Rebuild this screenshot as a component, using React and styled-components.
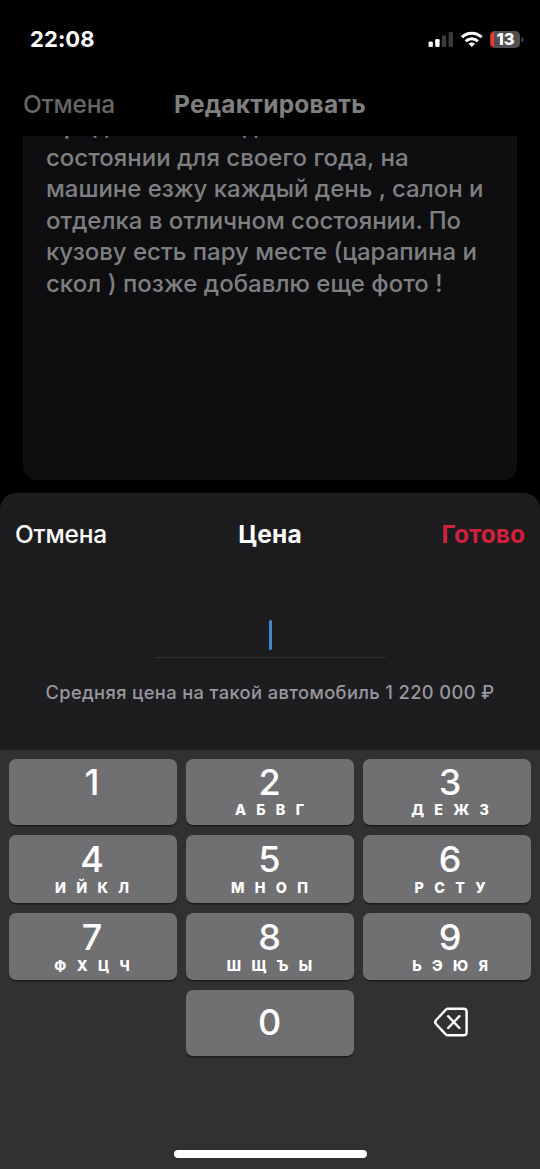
import React from 'react';
import styled, { createGlobalStyle } from 'styled-components';

const GlobalStyle = createGlobalStyle`
  * {
    box-sizing: border-box;
  }

  body {
    margin: 0;
    background-color: #000;
    font-family: Inter, 'Liberation Sans', sans-serif;
    color: #fff;
  }
`;

const Screen = styled.div`
  display: flex;
  flex-direction: column;
  width: 540px;
  height: 1169px;
  overflow: hidden;
  background-color: #000;
`;

const StatusBar = styled.div`
  display: flex;
  align-items: center;
  justify-content: space-between;
  height: 79px;
  padding: 0 16px 0 30px;
`;

const Time = styled.span`
  margin-top: -1px;
  font-size: 22px;
  font-weight: 700;
  letter-spacing: 0.1px;
`;

const StatusIcons = styled.svg`
  display: block;
`;

const Header = styled.div`
  display: grid;
  grid-template-columns: 1fr auto 1fr;
  align-items: center;
  height: ${({ $height }) => $height}px;
  padding: 0 ${({ $padding }) => $padding}px;
  font-size: 24.5px;
  line-height: 30px;
`;

const HeaderButton = styled.button`
  justify-self: ${({ $right }) => ($right ? 'end' : 'start')};
  padding: 0;
  border: 0;
  background: none;
  font: inherit;
  font-weight: ${({ $bold }) => ($bold ? 700 : 450)};
  letter-spacing: ${({ $bold }) => ($bold ? 0 : -0.2)}px;
  color: ${({ $color }) => $color || '#fff'};
`;

const HeaderTitle = styled.h1`
  margin: 0;
  font-size: 24.5px;
  font-weight: 700;
  letter-spacing: 0.22px;
  color: ${({ $color }) => $color || '#fff'};
`;

const Description = styled.div`
  height: 344px;
  margin: 7px 23px 13px;
  padding: 0 23px;
  overflow: hidden;
  border-radius: 0 0 14px 14px;
  background-color: #0e0e10;
  color: #7f7f81;
`;

const DescriptionText = styled.p`
  margin: -26px 0 0;
  font-size: 24px;
  font-weight: 500;
  line-height: 31.6px;
  white-space: pre;
`;

const Line = styled.span`
  display: block;
  letter-spacing: ${({ $spacing }) => $spacing || 0}px;
`;

const Sheet = styled.div`
  display: flex;
  flex-direction: column;
  height: 257px;
  border-radius: 16px 16px 0 0;
  background-color: #1d1d1f;
`;

const PriceInput = styled.div`
  display: flex;
  justify-content: center;
  align-items: flex-start;
  align-self: center;
  width: 231px;
  height: 38px;
  margin-top: 45px;
  border-bottom: 1px solid #303032;
`;

const Caret = styled.span`
  width: 3px;
  height: 30px;
  border-radius: 1.5px;
  background-color: #4787c9;
`;

const Hint = styled.p`
  margin: 22px 0 0;
  font-size: 18.3px;
  font-weight: 500;
  line-height: 24px;
  letter-spacing: 0.38px;
  text-align: center;
  white-space: nowrap;
  color: #98989e;
`;

const Keyboard = styled.div`
  display: flex;
  flex-direction: column;
  align-items: center;
  justify-content: space-between;
  height: 419px;
  padding: 9px 9px 11px;
  background-color: #313133;
`;

const Keys = styled.div`
  display: grid;
  grid-template-columns: repeat(3, 168px);
  grid-template-rows: 66px 68px 67px 66px;
  gap: 10px 9px;
`;

const Key = styled.button`
  display: flex;
  flex-direction: column;
  align-items: center;
  justify-content: ${({ $center }) => ($center ? 'center' : 'flex-start')};
  padding: ${({ $top }) => $top || 0}px 0 ${({ $center }) => ($center ? 1 : 0)}px;
  border: 0;
  border-radius: 7px;
  background-color: #707072;
  box-shadow: 0 1.5px 0 #1b1b1d;
  font-family: inherit;
  color: #fff;

  &:nth-child(3n + 1) {
    padding-right: 2px;
  }

  &:nth-child(3n + 2) {
    padding-right: 1px;
  }

  &:nth-child(3n) {
    padding-left: 6px;
  }
`;

const DeleteKey = styled.button`
  display: flex;
  grid-column: 3;
  align-items: center;
  justify-content: center;
  padding: 0 0 2px 8px;
  border: 0;
  background: none;
`;

const Digit = styled.span`
  font-size: 36px;
  font-weight: 500;
  line-height: 39px;
`;

const Letters = styled.span`
  margin: ${({ $shift }) => $shift}px -3.6px 0 0;
  font-size: 14.3px;
  font-weight: 800;
  line-height: 16px;
  letter-spacing: 3.6px;
  white-space: pre;
`;

const HomeIndicator = styled.div`
  width: 193px;
  height: 8px;
  border-radius: 4px;
  background-color: #fff;
`;

const lines = [
  { text: 'Продаю авто в идеальном' },
  { text: 'состоянии для своего года, на' },
  { text: 'машине езжу каждый день , салон и', spacing: -0.03 },
  { text: 'отделка в отличном состоянии. По', spacing: -0.03 },
  { text: 'кузову есть пару месте (царапина и', spacing: -0.02 },
  { text: 'скол ) позже добавлю еще фото !', spacing: 0.02 },
];

const keys = [
  { digit: '1', top: 4 },
  { digit: '2', letters: 'АБВГ', top: 4 },
  { digit: '3', letters: 'ДЕЖЗ', top: 4 },
  { digit: '4', letters: 'ИЙКЛ', top: 5, shift: 1 },
  { digit: '5', letters: 'МНОП', top: 5, shift: 1 },
  { digit: '6', letters: 'РСТУ', top: 5, shift: 1 },
  { digit: '7', letters: 'ФХЦЧ', top: 5, shift: 1 },
  { digit: '8', letters: 'ШЩЪЫ', top: 5, shift: 1 },
  { digit: '9', letters: 'ЬЭЮЯ', top: 5, shift: 1 },
];

function Status() {
  return (
    <StatusBar>
      <Time>22:08</Time>
      <StatusIcons width="96" height="20" viewBox="428 30 96 20">
        <g fill="#fff">
          <rect x="428.5" y="41.6" width="4.4" height="5.4" rx="1.3" />
          <rect x="435.2" y="39" width="4.4" height="8" rx="1.3" />
          <rect x="441.9" y="35.5" width="4.4" height="11.5" rx="1.3" fill="#3b3b3b" />
          <rect x="448.6" y="32" width="4.4" height="15" rx="1.3" fill="#3b3b3b" />
        </g>
        <g fill="none" stroke="#fff" strokeWidth="3">
          <path d="M462 37.3a14 14 0 0 1 19.6 0" />
          <path d="M465.7 41.3a8.7 8.7 0 0 1 12.2 0" />
        </g>
        <path d="M471.8 46.9l-3.2-3.2a4.6 4.6 0 0 1 6.4 0z" fill="#fff" />
        <clipPath id="battery">
          <rect x="490.3" y="31" width="29.7" height="17" rx="5" />
        </clipPath>
        <g clipPath="url(#battery)">
          <rect x="490" y="31" width="31" height="17" fill="#505052" />
          <rect x="490" y="31" width="4.1" height="17" fill="#e8392f" />
        </g>
        <path d="M521.4 36.7c2.6 1 2.6 4.8 0 5.8z" fill="#505052" />
        <text x="505.6" y="45.3" fill="#fff" fontSize="16.5" fontWeight="800" textAnchor="middle">
          13
        </text>
      </StatusIcons>
    </StatusBar>
  );
}

export default function App() {
  return (
    <>
      <GlobalStyle />
      <Screen>
        <Status />
        <Header $height={50} $padding={23}>
          <HeaderButton $color="#666">Отмена</HeaderButton>
          <HeaderTitle $color="#808080">Редактировать</HeaderTitle>
        </Header>
        <Description>
          <DescriptionText>
            {lines.map((line) => (
              <Line key={line.text} $spacing={line.spacing}>
                {line.text}
              </Line>
            ))}
          </DescriptionText>
        </Description>

        <Sheet>
          <Header $height={82} $padding={15}>
            <HeaderButton>Отмена</HeaderButton>
            <HeaderTitle>Цена</HeaderTitle>
            <HeaderButton $right $bold $color="#d2213b">
              Готово
            </HeaderButton>
          </Header>
          <PriceInput>
            <Caret />
          </PriceInput>
          <Hint>Средняя цена на такой автомобиль 1 220 000 ₽</Hint>
        </Sheet>

        <Keyboard>
          <Keys>
            {keys.map(({ digit, letters, top, shift = 0 }) => (
              <Key key={digit} $top={top}>
                <Digit>{digit}</Digit>
                {letters && <Letters $shift={shift}>{letters.split('').join(' ')}</Letters>}
              </Key>
            ))}
            <span />
            <Key $center>
              <Digit>0</Digit>
            </Key>
            <DeleteKey aria-label="Удалить">
              <svg
                width="36"
                height="30"
                viewBox="0 0 36 30"
                fill="none"
                stroke="#fff"
                strokeWidth="2.4"
                strokeLinecap="round"
                strokeLinejoin="round"
              >
                <path d="M15 1.8H30.7a2.9 2.9 0 0 1 2.9 2.9V25.4a2.9 2.9 0 0 1-2.9 2.9H15a3.300 3.300 0 0 1-2.300-1L3.200 17.200a3 3 0 0 1 0-4.200L12.700 2.800a3.300 3.300 0 0 1 2.300-1z" />
                <path d="M15.200 9.200l11.200 11.800M26.400 9.200L15.200 21" />
              </svg>
            </DeleteKey>
          </Keys>
          <HomeIndicator />
        </Keyboard>
      </Screen>
    </>
  );
}
